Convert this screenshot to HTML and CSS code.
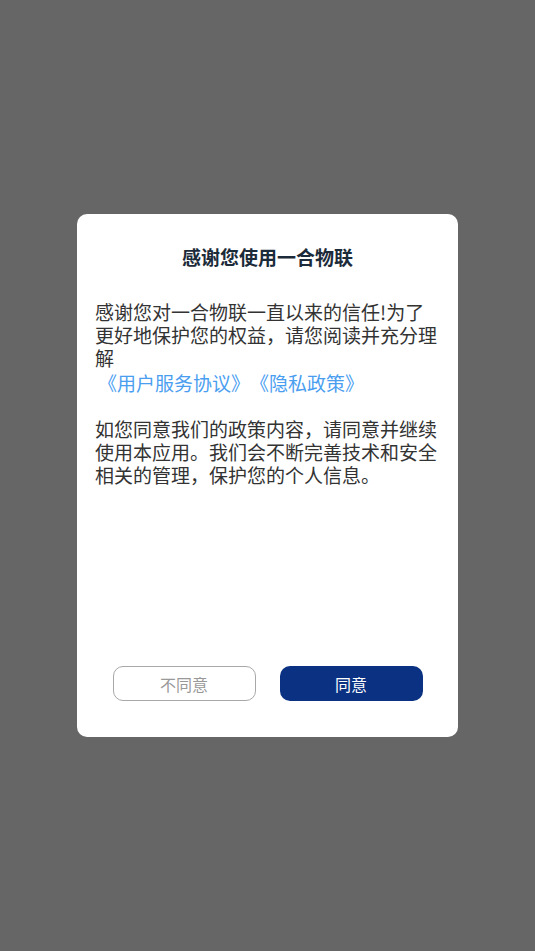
FILE: index.html
```html
<!DOCTYPE html>
<html lang="zh-CN">
<head>
  <meta charset="UTF-8">
  <title>一合物联</title>
  <link rel="stylesheet" href="styles.css">
</head>
<body>
  <div class="mask">
    <div class="dialog">
      <div class="dialog-title">感谢您使用一合物联</div>
      <div class="dialog-body">
        <p>感谢您对一合物联一直以来的信任!为了更好地保护您的权益，请您阅读并充分理解</p>
        <div class="links">
          <a href="#">《用户服务协议》</a><a href="#">《隐私政策》</a>
        </div>
        <p>如您同意我们的政策内容，请同意并继续使用本应用。我们会不断完善技术和安全相关的管理，保护您的个人信息。</p>
      </div>
      <div class="dialog-actions">
        <button class="btn btn-cancel">不同意</button>
        <button class="btn btn-ok">同意</button>
      </div>
    </div>
  </div>
</body>
</html>
```

FILE: styles.css
```css
html, body {
  margin: 0;
  height: 100%;
}
body {
  background-color: #666666;
  font-family: "Noto Sans CJK SC", "Noto Sans", sans-serif;
}
.mask {
  height: 100%;
  display: flex;
  align-items: center;
  justify-content: center;
}
.dialog {
  width: 381px;
  height: 523px;
  box-sizing: border-box;
  background-color: white;
  border-radius: 10px;
  padding: 28px 18px 36px;
  display: flex;
  flex-direction: column;
}
.dialog-title {
  text-align: center;
  font-size: 19px;
  font-weight: bold;
  color: #1c2b39;
  line-height: 30px;
}
.dialog-body {
  margin-top: 28px;
  font-size: 19px;
  line-height: 23px;
  color: #333333;
  text-spacing-trim: space-all;
}
.dialog-body p {
  margin: 0;
}
.links {
  margin: 2px 0 23px;
  padding-left: 3px;
}
.links a {
  color: #4a9ef0;
  text-decoration: none;
}
.dialog-actions {
  margin-top: auto;
  display: flex;
  justify-content: center;
  gap: 24px;
}
.btn {
  width: 143px;
  height: 35px;
  border-radius: 10px;
  font-size: 16px;
  font-family: inherit;
  cursor: pointer;
}
.btn-cancel {
  background-color: white;
  border: 1.5px solid #a8a8a8;
  color: #999999;
}
.btn-ok {
  background-color: #0b3183;
  border: none;
  color: white;
}
```
